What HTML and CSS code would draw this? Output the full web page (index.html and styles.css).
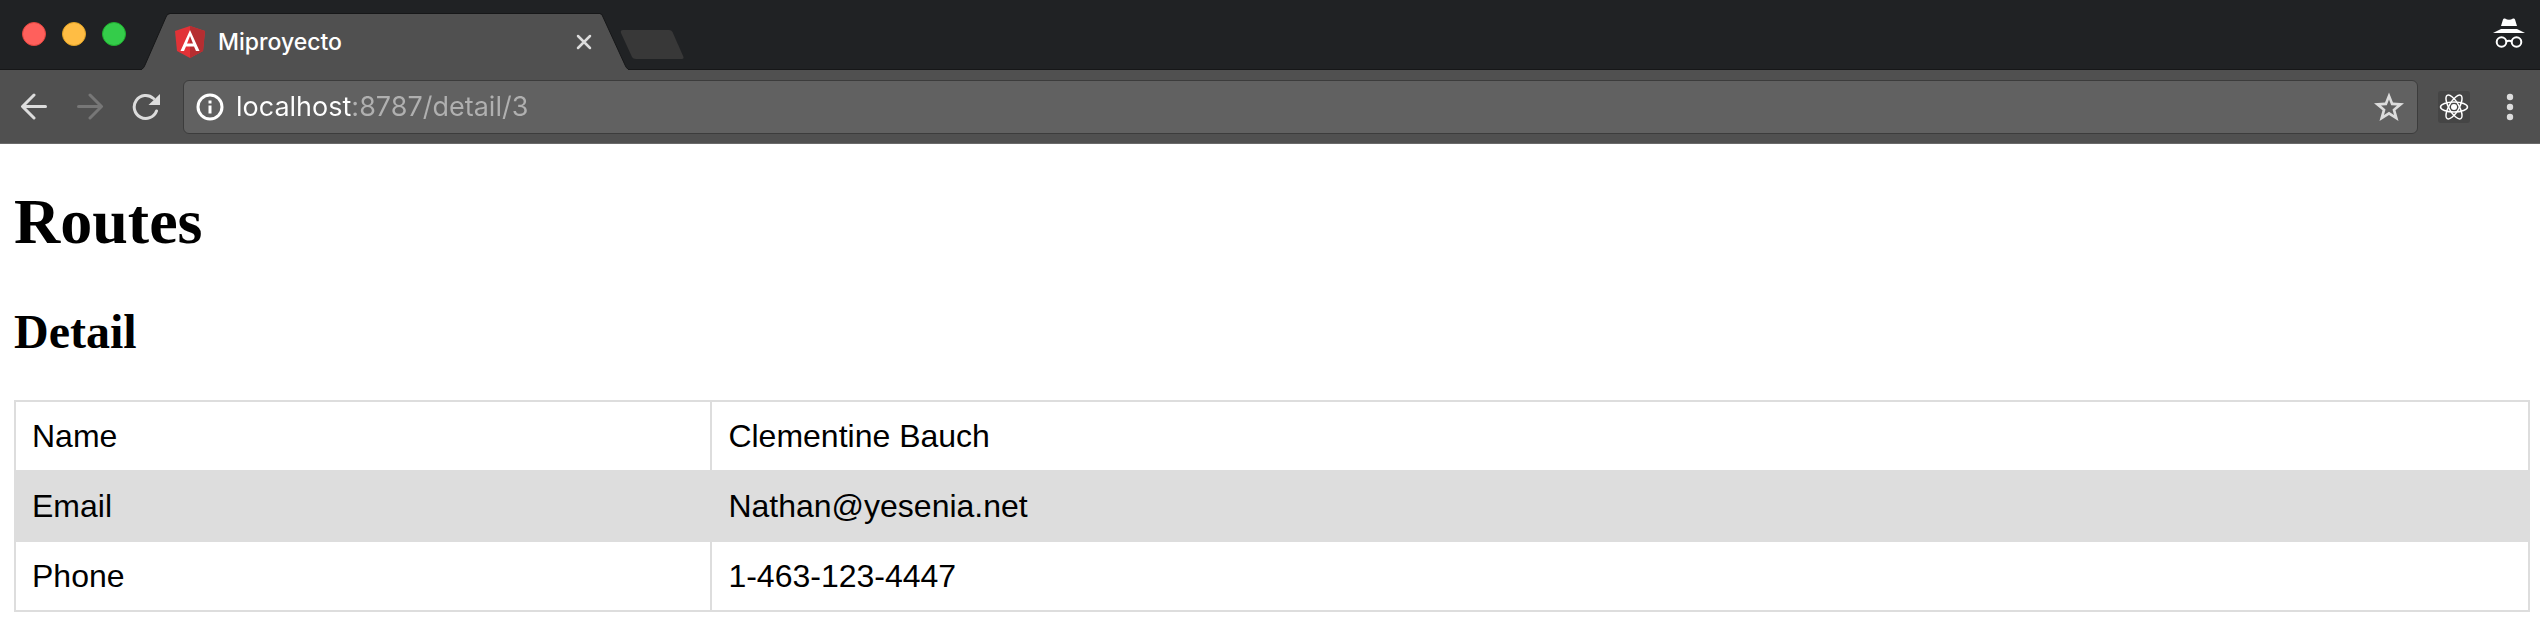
FILE: index.html
```html
<!DOCTYPE html>
<html lang="en">
<head>
<meta charset="utf-8">
<title>Miproyecto</title>
<link rel="stylesheet" href="styles.css">
</head>
<body>
<header class="browser">
  <div class="tabstrip">
    <div class="lights">
      <button class="light light-close" aria-label="Close window"></button>
      <button class="light light-minimize" aria-label="Minimize window"></button>
      <button class="light light-zoom" aria-label="Zoom window"></button>
    </div>
    <div class="tab">
      <svg class="tab-edge" viewBox="0 0 28 57" aria-hidden="true">
        <path class="tab-fill" d="M0 57 V56 Q2 55 3 52 L24 4 Q25 1 28 1 V57Z"/>
        <path class="tab-line" d="M0 56 Q2 55 3 52 L24 4 Q25 0.5 28 0.5"/>
      </svg>
      <div class="tab-body">
        <svg class="favicon" viewBox="0 0 32 34" aria-hidden="true">
          <path fill="#e23237" d="M16 1 L1 6 L3 26 L16 33 L29 26 L31 6Z"/>
          <path fill="#b52e31" d="M16 1 V33 L29 26 L31 6Z"/>
          <path fill="#fff" fill-rule="evenodd" d="M16 5 L6.500 26 H10 L12 21.500 H20 L22 26 H25.500Z M16 11 L19 18.500 H13Z"/>
        </svg>
        <span class="tab-title">Miproyecto</span>
        <button class="icon-button tab-close" aria-label="Close tab">
          <svg viewBox="0 0 16 16" width="16" height="16"><path d="M2 2 L14 14 M14 2 L2 14" stroke="#dcdcdc" stroke-width="2.500" stroke-linecap="round"/></svg>
        </button>
      </div>
      <svg class="tab-edge" viewBox="0 0 28 57" aria-hidden="true">
        <path class="tab-fill" d="M28 57 V56 Q26 55 25 52 L3 4 Q2 1 0 1 V57Z"/>
        <path class="tab-line" d="M28 56 Q26 55 25 52 L3 4 Q2 0.500 0 0.500"/>
      </svg>
    </div>
    <button class="icon-button new-tab" aria-label="New tab">
      <svg viewBox="0 0 64 30" width="64" height="30"><path fill="#383838" d="M3 0 H49 Q51.500 0 52.500 2 L63.500 27 Q64 29 62 29 H16 Q13 29 12 27 L1 3 Q0 0 3 0Z"/></svg>
    </button>
    <svg class="incognito" viewBox="0 0 34 32" width="34" height="32" aria-hidden="true">
      <path fill="#fff" d="M9 8 L11 1.500 Q11.500 0 13 0.500 Q17 3 21 0.500 Q22.500 0 23 1.500 L25 8Z M1 15 L9 11 H25 L33 15Z"/>
      <g fill="none" stroke="#fff" stroke-width="2"><circle cx="9.500" cy="24" r="4.800"/><circle cx="24.500" cy="24" r="4.800"/><path d="M14 23.500 Q17 22 20 23.500"/></g>
    </svg>
  </div>
  <div class="toolbar">
    <nav class="nav-buttons" aria-label="History">
      <button class="icon-button" aria-label="Back">
        <svg viewBox="0 0 28 28" width="28" height="28"><path class="stroke" d="M25.500 13.500 H3 M14 2 L2.500 13.500 L14 25"/></svg>
      </button>
      <button class="icon-button" aria-label="Forward" disabled>
        <svg viewBox="0 0 28 28" width="28" height="28"><path class="stroke stroke-dim" d="M2.500 13.500 H25 M14 2 L25.500 13.500 L14 25"/></svg>
      </button>
      <button class="icon-button" aria-label="Reload">
        <svg viewBox="0 0 28 28" width="28" height="28"><path class="stroke" d="M24.500 18 A11.500 11.500 0 1 1 21.500 5.500"/><path fill="#dcdcdc" d="M28 1 V12 H16.500Z"/></svg>
      </button>
    </nav>
    <div class="omnibox">
      <button class="icon-button" aria-label="Site information">
        <svg viewBox="0 0 28 28" width="28" height="28"><circle cx="14" cy="14" r="12" fill="none" stroke="#fff" stroke-width="3"/><path fill="#fff" d="M12.500 7.500 h3 v3 h-3Z M12.500 12.500 h3 v8 h-3Z"/></svg>
      </button>
      <input class="url" type="text" value="localhost:8787/detail/3" aria-label="Address" spellcheck="false">
      <button class="icon-button" aria-label="Bookmark this page">
        <svg viewBox="0 0 30 30" width="30" height="30"><path fill="#dcdcdc" fill-rule="evenodd" d="M15 0.500 L19 10.500 L30 11.200 L21.500 18.300 L24.500 29 L15 23 L5.500 29 L8.500 18.300 L0 11.200 L11 10.500Z M15 7.500 L12.800 13.200 L7 13.500 L11.500 17.400 L10 23 L15 19.800 L20 23 L18.500 17.400 L23 13.500 L17.200 13.200Z"/></svg>
      </button>
    </div>
    <button class="icon-button extension" aria-label="React developer tools">
      <svg viewBox="0 0 32 32" width="32" height="32"><g fill="none" stroke="#fff" stroke-width="1.500"><ellipse cx="16" cy="16" rx="13.500" ry="5"/><ellipse cx="16" cy="16" rx="13.500" ry="5" transform="rotate(60 16 16)"/><ellipse cx="16" cy="16" rx="13.500" ry="5" transform="rotate(120 16 16)"/></g><circle cx="16" cy="16" r="3" fill="#fff"/></svg>
    </button>
    <button class="icon-button menu" aria-label="Menu">
      <svg viewBox="0 0 8 28" width="8" height="28"><g fill="#dcdcdc"><circle cx="4" cy="4" r="3.200"/><circle cx="4" cy="14" r="3.200"/><circle cx="4" cy="24" r="3.200"/></g></svg>
    </button>
  </div>
</header>
<main class="page">
  <h1 class="title">Routes</h1>
  <h2 class="subtitle">Detail</h2>
  <table class="detail">
    <tbody>
      <tr><th scope="row">Name</th><td>Clementine Bauch</td></tr>
      <tr><th scope="row">Email</th><td>Nathan@yesenia.net</td></tr>
      <tr><th scope="row">Phone</th><td>1-463-123-4447</td></tr>
    </tbody>
  </table>
</main>
</body>
</html>
```
FILE: styles.css
```css
* { box-sizing: border-box; }

body {
  margin: 0;
  background: #fff;
  color: #000;
}

svg { display: block; }

.icon-button {
  display: block;
  flex: none;
  padding: 0;
  border: 0;
  background: none;
}

.tabstrip {
  display: flex;
  align-items: flex-end;
  height: 70px;
  padding: 0 14px 0 22px;
  background: #202224;
  box-shadow: inset 0 -1px #161718;
}

.lights {
  display: flex;
  gap: 16px;
  margin: 0 16px 24px 0;
}

.light {
  width: 24px;
  height: 24px;
  padding: 0;
  border: 1px solid;
  border-radius: 50%;
}

.light-close { background: #ff605c; border-color: #e2463f; }
.light-minimize { background: #ffbd44; border-color: #e1a325; }
.light-zoom { background: #34cc4a; border-color: #1fae2e; }

.tab {
  display: flex;
  height: 57px;
}

.tab-edge {
  width: 28px;
  height: 57px;
}

.tab-fill { fill: #505050; }
.tab-line { fill: none; stroke: #161718; }

.tab-body {
  display: flex;
  align-items: center;
  width: 430px;
  padding: 0 8px 0 4px;
  border-top: 1px solid #161718;
  background: #505050;
}

.favicon {
  width: 32px;
  height: 34px;
}

.tab-title {
  flex: 1;
  padding-left: 12px;
  color: #fff;
  font: 500 23px/28px Inter, sans-serif;
}

.new-tab { margin: 0 0 10px -8px; }

.incognito {
  margin: 0 0 20px auto;
}

.toolbar {
  display: flex;
  align-items: center;
  gap: 20px;
  height: 74px;
  padding: 0 26px 0 20px;
  border-bottom: 1px solid #6a6a6a;
  background: #505050;
}

.nav-buttons {
  display: flex;
  gap: 28px;
  margin-right: 3px;
}

.stroke {
  fill: none;
  stroke: #dcdcdc;
  stroke-width: 3;
  stroke-linecap: round;
  stroke-linejoin: round;
}

.stroke-dim { stroke: #777; }

.omnibox {
  display: flex;
  flex: 1;
  align-items: center;
  gap: 12px;
  height: 54px;
  padding: 0 13px 0 12px;
  border: 1px solid #3c3c3c;
  border-radius: 6px;
  background: #616161;
}

.url {
  flex: 1;
  min-width: 0;
  height: 40px;
  padding: 0;
  border: 0;
  outline: 0;
  background: linear-gradient(90deg, #fff 0 116px, #b0b0b0 116px);
  -webkit-background-clip: text;
  background-clip: text;
  color: transparent;
  font: 400 27px/40px Inter, sans-serif;
}

.extension {
  border-radius: 3px;
  background: #454545;
}

.menu { margin-left: 16px; }

.page { padding: 42px 10px 12px 14px; }

.title {
  margin: 0 0 46px;
  font: 700 64px/72px "Liberation Serif", serif;
}

.subtitle {
  margin: 0 0 40px;
  font: 700 48px/56px "Liberation Serif", serif;
}

.detail {
  width: 100%;
  border-collapse: collapse;
  table-layout: fixed;
  font: 400 32px/36px "Liberation Sans", sans-serif;
}

.detail th,
.detail td {
  padding: 16px;
  border: 2px solid #ddd;
  font-weight: 400;
  text-align: left;
}

.detail th { width: 27.7%; }

.detail tr:nth-child(even) { background: #ddd; }
```
